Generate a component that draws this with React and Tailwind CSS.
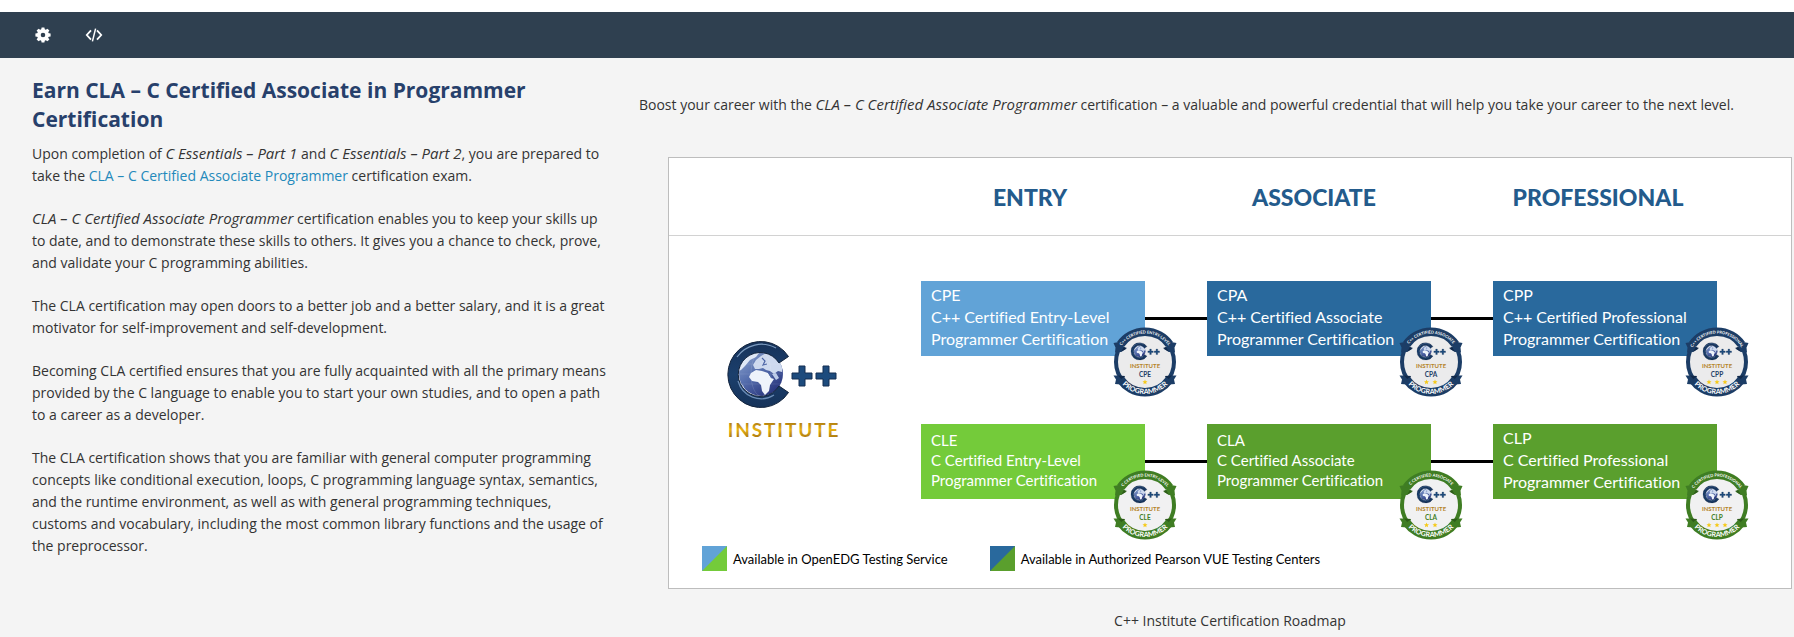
import React, { useId } from "react";

const GEAR_TEETH = [0, 45, 90, 135, 180, 225, 270, 315];

function GearIcon() {
  return (
    <svg viewBox="0 0 16 16" className="h-4 w-4" aria-hidden="true">
      <g fill="#fff">
        {GEAR_TEETH.map((angle) => (
          <path key={angle} d="M6 3.5 L6.6 0.4 H9.4 L10 3.5 Z" transform={`rotate(${angle} 8 8)`} />
        ))}
      </g>
      <circle cx="8" cy="8" r="4.1" fill="none" stroke="#fff" strokeWidth="3.6" />
    </svg>
  );
}

function CodeIcon() {
  return (
    <svg viewBox="0 0 18 16" className="h-4 w-[18px]" fill="none" stroke="#fff" strokeWidth="1.8" aria-hidden="true">
      <path d="M6 3.4 L1.8 8 L6 12.6 M12 3.4 L16.2 8 L12 12.6" />
      <path d="M10.6 1.6 L7.4 14.4" strokeWidth="1.5" />
    </svg>
  );
}

/* The "C" ring with a globe inside it and two plus signs, on a 110 x 68 grid. */
function GlobeMark() {
  const id = useId();
  return (
    <>
      <defs>
        <linearGradient id={`${id}ring`} x1="0" y1="0" x2="0" y2="1">
          <stop offset="0" stopColor="#16325a" />
          <stop offset="0.5" stopColor="#1b3f6c" />
          <stop offset="1" stopColor="#16335a" />
        </linearGradient>
        <linearGradient id={`${id}sea`} x1="0" y1="0" x2="0.7" y2="1">
          <stop offset="0" stopColor="#8fa6d0" />
          <stop offset="0.5" stopColor="#566fae" />
          <stop offset="1" stopColor="#28347c" />
        </linearGradient>
        <clipPath id={`${id}clip`}>
          <circle cx="33" cy="33" r="22" />
        </clipPath>
      </defs>
      <circle cx="33" cy="33" r="22" fill={`url(#${id}sea)`} />
      <g clipPath={`url(#${id}clip)`}>
        <path d="M10 22 L18 14 L26 10 L31 12 L28 16 L22 19 L17 25 L13 29 L10 30 Z" fill="#dfe8f6" />
        <path d="M25 24 L28 19 L33 15 L38 12 L44 14 L51 19 L54 25 L54 31 L50 30 L46 33 L42 30 L38 29 L35 27 L31 28 L27 28 Z" fill="#cdd9ef" />
        <path d="M23 32 L28 29 L34 30 L40 32 L43 37 L46 38 L42 44 L41 50 L37 54 L34 50 L33 44 L30 41 L24 40 L21 36 Z" fill="#eef3fb" />
        <path d="M44 33 L48 32 L51 37 L48 39 Z M10 42 L15 44 L17 49 L13 48 Z" fill="#bccbe8" />
        <path d="M34 17 L37 20 L35 24 L39 23 M40 31 L44 37" fill="none" stroke="#4a63a5" strokeWidth="1.2" />
        <ellipse cx="33" cy="33" rx="10" ry="22" fill="none" stroke="#fff" strokeOpacity="0.2" strokeWidth="0.6" />
        <path d="M11 33 H55 M14 23 H52 M14 43 H52" stroke="#fff" strokeOpacity="0.15" strokeWidth="0.6" />
      </g>
      <path
        d="M60.5 15.5 A33 33 0 1 0 60.5 51.5 L51 45 A22 22 0 1 1 51 22 Z"
        fill={`url(#${id}ring)`}
        stroke="#12233c"
        strokeWidth="1"
      />
      <path d="M9 16 A30 30 0 0 1 48 7" fill="none" stroke="#7d9cc0" strokeWidth="1.2" />
      <path d="M10 40 A24 24 0 0 0 46 54" fill="none" stroke="#6c8db6" strokeWidth="1.2" />
      <path
        d="M71 25 h6 v7 h7 v6 h-7 v7 h-6 v-7 h-7 v-6 h7 Z M95 25 h6 v7 h7 v6 h-7 v7 h-6 v-7 h-7 v-6 h7 Z"
        fill="#1d4b7d"
        stroke="#142f52"
        strokeWidth="1"
      />
    </>
  );
}

function InstituteLogo() {
  return (
    <svg viewBox="0 0 114 100" className="h-[100px] w-[114px] overflow-visible" role="img" aria-label="C++ Institute">
      <defs>
        <linearGradient id="gold" x1="0" y1="0" x2="0" y2="1">
          <stop offset="0" stopColor="#8a5a12" />
          <stop offset="0.5" stopColor="#e9b414" />
          <stop offset="1" stopColor="#8f5e10" />
        </linearGradient>
      </defs>
      <g transform="translate(1 1)">
        <GlobeMark />
      </g>
      <text
        x="57"
        y="97"
        textAnchor="middle"
        className="font-['Lato',sans-serif] text-[19px] font-bold tracking-widest"
        fill="url(#gold)"
      >
        INSTITUTE
      </text>
    </svg>
  );
}

const STAR = "M0 -5 L1.4 -1.7 L5 -1.5 L2.3 0.8 L3.1 4.3 L0 2.4 L-3.1 4.3 L-2.3 0.8 L-5 -1.5 L-1.4 -1.7 Z";

const BADGE_COLORS = {
  navy: { ring: "#1c3d66", fold: "#11294a", face: "#ebebec" },
  green: { ring: "#3f7d23", fold: "#2d5c18", face: "#f1f1f2" },
};

function Badge({ code, motto, stars, tone }) {
  const id = useId();
  const c = BADGE_COLORS[tone];
  const starXs = { 1: [64], 2: [55, 72], 3: [48, 64, 80] }[stars];
  return (
    <svg
      viewBox="0 0 128 140"
      className="absolute top-[46px] left-full h-[70px] w-16 -translate-x-1/2"
      role="img"
      aria-label={`${code} badge`}
    >
      <circle cx="64" cy="70" r="58" fill={c.face} stroke={c.ring} strokeWidth="8" />
      <path d="M12 30 L1 32 L5 41 L4 51 L16 50 L26 44 Z M116 30 L127 32 L123 41 L124 51 L112 50 L102 44 Z" fill={c.ring} />
      <path d="M10 97 L1 97 L6 105 L4 114 L16 115 L24 104 Z M118 97 L127 97 L122 105 L124 114 L112 115 L104 104 Z" fill={c.ring} />
      <path d="M16 50 L22 40 L28 42 Z M112 50 L106 40 L100 42 Z M10 97 L24 98 L20 108 Z M118 97 L104 98 L108 108 Z" fill={c.fold} />
      <path d="M15 35 A60 60 0 0 1 113 35" fill="none" stroke={c.ring} strokeWidth="17" />
      <path d="M15 105 A60 60 0 0 0 113 105" fill="none" stroke={c.ring} strokeWidth="17" />
      <path id={`${id}top`} d="M7 70 A57 57 0 0 1 121 70" fill="none" />
      <path id={`${id}bottom`} d="M0 70 A64 64 0 0 0 128 70" fill="none" />
      <text className="font-['Lato',sans-serif] text-[8px] font-bold" fill="#fff" textAnchor="middle">
        <textPath href={`#${id}top`} startOffset="50%">{motto}</textPath>
      </text>
      <text className="font-['Lato',sans-serif] text-[14px] font-bold" fill="#fff" textAnchor="middle">
        <textPath href={`#${id}bottom`} startOffset="50%">PROGRAMMER</textPath>
      </text>
      <svg x="35" y="31" width="60" height="36" viewBox="0 0 110 68">
        <GlobeMark />
      </svg>
      <text x="64" y="82" textAnchor="middle" className="font-['Lato',sans-serif] text-[12px] font-bold" fill="#b4842a">
        INSTITUTE
      </text>
      <text x="64" y="99" textAnchor="middle" className="font-['Lato',sans-serif] text-[13px] font-bold" fill={c.ring}>
        {code}
      </text>
      {starXs.map((x) => (
        <path key={x} d={STAR} transform={`translate(${x} 110)`} fill="#f6c915" />
      ))}
    </svg>
  );
}

const TRACKS = [
  [
    { code: "CPE", name: "C++ Certified Entry-Level", motto: "C++ CERTIFIED ENTRY-LEVEL", box: "bg-[#61a3d7] text-[16px] leading-[22px]" },
    { code: "CPA", name: "C++ Certified Associate", motto: "C++ CERTIFIED ASSOCIATE", box: "bg-[#29699d] text-[16px] leading-[22px]" },
    { code: "CPP", name: "C++ Certified Professional", motto: "C++ CERTIFIED PROFESSIONAL", box: "bg-[#29699d] text-[16px] leading-[22px]" },
  ],
  [
    { code: "CLE", name: "C Certified Entry-Level", motto: "C CERTIFIED ENTRY-LEVEL", box: "bg-[#74cb3a] text-[15px] leading-[20px]" },
    { code: "CLA", name: "C Certified Associate", motto: "C CERTIFIED ASSOCIATE", box: "bg-[#5a9f2d] text-[15px] leading-[20px]" },
    { code: "CLP", name: "C Certified Professional", motto: "C CERTIFIED PROFESSIONAL", box: "bg-[#5a9f2d] text-[16px] leading-[22px]" },
  ],
];

function Track({ certs, tone }) {
  return (
    <div className="flex items-center">
      {certs.map((cert, i) => (
        <React.Fragment key={cert.code}>
          {i > 0 && <div className="h-[3px] w-[62px] bg-black" />}
          <div className={`relative flex h-[75px] w-56 flex-col justify-center pb-[3px] pl-[10px] whitespace-nowrap text-white ${cert.box}`}>
            <p>{cert.code}</p>
            <p>{cert.name}</p>
            <p>Programmer Certification</p>
            <Badge code={cert.code} motto={cert.motto} stars={i + 1} tone={tone} />
          </div>
        </React.Fragment>
      ))}
    </div>
  );
}

function LegendItem({ upper, lower, children }) {
  return (
    <li className="flex items-center gap-[6px]">
      <svg viewBox="0 0 25 25" className="h-[25px] w-[25px]" aria-hidden="true">
        <rect width="25" height="25" className={lower} />
        <path d="M0 0 H25 L0 25 Z" className={upper} />
      </svg>
      {children}
    </li>
  );
}

function Roadmap() {
  return (
    <div className="border border-[#bdbdbd] bg-white font-['Lato',sans-serif] [font-variant-ligatures:none]">
      <div className="flex h-[78px] items-center justify-end gap-[60px] border-b border-[#d2d2d2] pr-[81px] text-center text-[23px] font-black text-[#235b8c]">
        <h2 className="w-56">ENTRY</h2>
        <h2 className="w-56">ASSOCIATE</h2>
        <h2 className="w-56">PROFESSIONAL</h2>
      </div>
      <div className="flex items-center pt-[45px] pr-[74px]">
        <div className="flex flex-1 justify-center pr-[22px]">
          <InstituteLogo />
        </div>
        <div className="flex flex-col gap-[68px]">
          <Track certs={TRACKS[0]} tone="navy" />
          <Track certs={TRACKS[1]} tone="green" />
        </div>
      </div>
      <ul className="flex gap-[42px] pt-[47px] pb-[17px] pl-[33px] text-[13px] text-black">
        <LegendItem upper="fill-[#61a3d7]" lower="fill-[#74cb3a]">Available in OpenEDG Testing Service</LegendItem>
        <LegendItem upper="fill-[#29699d]" lower="fill-[#5a9f2d]">Available in Authorized Pearson VUE Testing Centers</LegendItem>
      </ul>
    </div>
  );
}

function Term({ children }) {
  return <em className="text-[15px] leading-none">{children}</em>;
}

export default function App() {
  return (
    <div className="flex min-h-screen flex-col bg-white pt-3 font-['Open_Sans',sans-serif] text-sm leading-[22px] text-[#333]">
      <header className="flex h-[46px] items-center gap-[34px] bg-[#2f4050] pl-[35px]">
        <button type="button" aria-label="Settings"><GearIcon /></button>
        <button type="button" aria-label="Code"><CodeIcon /></button>
      </header>
      <main className="flex flex-1 bg-[#f4f4f4]">
        <section className="flex w-[34%] flex-col gap-[21px] pt-[18px] pr-[2px] pl-8">
          <div>
            <h1 className="mb-[9px] text-[21px] leading-[29px] font-bold text-[#27406b]">
              Earn CLA – C Certified Associate in Programmer Certification
            </h1>
            <p>
              Upon completion of <Term>C Essentials – Part 1</Term> and <Term>C Essentials – Part 2</Term>, you are prepared to
              take the <a href="#cla" className="text-[#2389bb]">CLA – C Certified Associate Programmer</a> certification exam.
            </p>
          </div>
          <p>
            <Term>CLA – C Certified Associate Programmer</Term> certification enables you to keep your skills up to date, and
            to demonstrate these skills to others. It gives you a chance to check, prove, and validate your C programming
            abilities.
          </p>
          <p>
            The CLA certification may open doors to a better job and a better salary, and it is a great motivator for
            self-improvement and self-development.
          </p>
          <p>
            Becoming CLA certified ensures that you are fully acquainted with all the primary means provided by the C
            language to enable you to start your own studies, and to open a path to a career as a developer.
          </p>
          <p>
            The CLA certification shows that you are familiar with general computer programming concepts like conditional
            execution, loops, C programming language syntax, semantics, and the runtime environment, as well as with
            general programming techniques, customs and vocabulary, including the most common library functions and the
            usage of the preprocessor.
          </p>
        </section>
        <section className="flex-1 pt-9 pl-[29px]">
          <p>
            Boost your career with the <Term>CLA – C Certified Associate Programmer</Term> certification – a valuable and
            powerful credential that will help you take your career to the next level.
          </p>
          <figure className="mt-[41px] mr-[2px] ml-[29px]">
            <Roadmap />
            <figcaption className="mt-[21px] text-center">C++ Institute Certification Roadmap</figcaption>
          </figure>
        </section>
      </main>
    </div>
  );
}
